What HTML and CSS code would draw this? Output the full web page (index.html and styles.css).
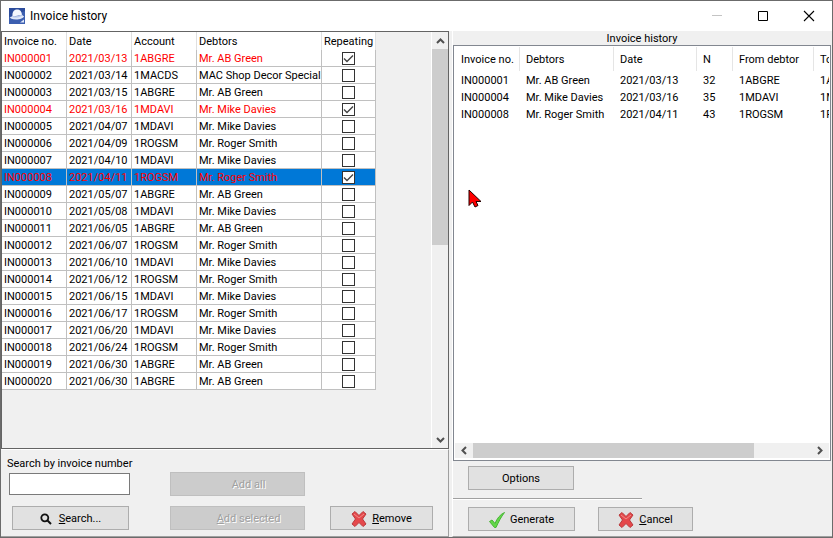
FILE: index.html
```html
<!DOCTYPE html>
<html lang="en">

<head>
  <meta charset="utf-8">
  <title>Invoice history</title>
  <link rel="stylesheet" href="styles.css">
</head>

<body>
  <header class="title-bar">
    <svg class="app-icon" width="16" height="16" viewBox="0 0 16 16">
      <rect width="16" height="16" fill="#3c5fb0"/>
      <path d="M0 9L16 3V0H0z" fill="#2c4c9c"/>
      <path d="M3.500 8.500C3 4 5 1.500 8 1.500s4.500 1.500 5 5.500z" fill="#f4f7fd"/>
      <path d="M1 9c1 0 2-.500 2.500-1 3 .800 6.500.500 9.500-1.500.500 1 1.500 1.500 2 1.500 0 2-4 3.500-8 3.500S1 10.500 1 9z" fill="#dfe7f7"/>
      <path d="M3.500 8c3 .800 6.500.500 9.500-1.500v1.200c-3 2-6.500 2.300-9.500 1.500z" fill="#b9c8ea"/>
      <path d="M11 14.500l4-3v3z" fill="#dfe7f7"/>
    </svg>
    <h1>Invoice history</h1>
    <div class="window-buttons">
      <button aria-label="Minimize" disabled><svg width="12" height="12"><path d="M1 5.500h10" stroke="#c4c4c4"/></svg></button>
      <button aria-label="Maximize"><svg width="12" height="12"><path d="M1.500 1.500h9v9h-9z" fill="none" stroke="#000"/></svg></button>
      <button aria-label="Close"><svg width="12" height="12"><path d="M1 1l10 10M11 1L1 11" stroke="#000" stroke-width="1.100"/></svg></button>
    </div>
  </header>

  <main class="content">
    <section class="left-panel">
      <div class="grid-box">
        <div class="grid-scroll">
          <table class="invoice-table">
            <colgroup><col class="col-no"><col class="col-date"><col class="col-account"><col class="col-debtor"><col class="col-repeat"></colgroup>
            <thead>
              <tr><th>Invoice no.</th><th>Date</th><th>Account</th><th>Debtors</th><th>Repeating</th></tr>
            </thead>
            <tbody>
              <tr class="repeating"><td>IN000001</td><td>2021/03/13</td><td>1ABGRE</td><td>Mr. AB Green</td><td><input type="checkbox" aria-label="Repeat IN000001" checked></td></tr>
              <tr><td>IN000002</td><td>2021/03/14</td><td>1MACDS</td><td>MAC Shop Decor Special</td><td><input type="checkbox" aria-label="Repeat IN000002"></td></tr>
              <tr><td>IN000003</td><td>2021/03/15</td><td>1ABGRE</td><td>Mr. AB Green</td><td><input type="checkbox" aria-label="Repeat IN000003"></td></tr>
              <tr class="repeating"><td>IN000004</td><td>2021/03/16</td><td>1MDAVI</td><td>Mr. Mike Davies</td><td><input type="checkbox" aria-label="Repeat IN000004" checked></td></tr>
              <tr><td>IN000005</td><td>2021/04/07</td><td>1MDAVI</td><td>Mr. Mike Davies</td><td><input type="checkbox" aria-label="Repeat IN000005"></td></tr>
              <tr><td>IN000006</td><td>2021/04/09</td><td>1ROGSM</td><td>Mr. Roger Smith</td><td><input type="checkbox" aria-label="Repeat IN000006"></td></tr>
              <tr><td>IN000007</td><td>2021/04/10</td><td>1MDAVI</td><td>Mr. Mike Davies</td><td><input type="checkbox" aria-label="Repeat IN000007"></td></tr>
              <tr class="repeating selected"><td>IN000008</td><td>2021/04/11</td><td>1ROGSM</td><td>Mr. Roger Smith</td><td><input type="checkbox" aria-label="Repeat IN000008" checked></td></tr>
              <tr><td>IN000009</td><td>2021/05/07</td><td>1ABGRE</td><td>Mr. AB Green</td><td><input type="checkbox" aria-label="Repeat IN000009"></td></tr>
              <tr><td>IN000010</td><td>2021/05/08</td><td>1MDAVI</td><td>Mr. Mike Davies</td><td><input type="checkbox" aria-label="Repeat IN000010"></td></tr>
              <tr><td>IN000011</td><td>2021/06/05</td><td>1ABGRE</td><td>Mr. AB Green</td><td><input type="checkbox" aria-label="Repeat IN000011"></td></tr>
              <tr><td>IN000012</td><td>2021/06/07</td><td>1ROGSM</td><td>Mr. Roger Smith</td><td><input type="checkbox" aria-label="Repeat IN000012"></td></tr>
              <tr><td>IN000013</td><td>2021/06/10</td><td>1MDAVI</td><td>Mr. Mike Davies</td><td><input type="checkbox" aria-label="Repeat IN000013"></td></tr>
              <tr><td>IN000014</td><td>2021/06/12</td><td>1ROGSM</td><td>Mr. Roger Smith</td><td><input type="checkbox" aria-label="Repeat IN000014"></td></tr>
              <tr><td>IN000015</td><td>2021/06/15</td><td>1MDAVI</td><td>Mr. Mike Davies</td><td><input type="checkbox" aria-label="Repeat IN000015"></td></tr>
              <tr><td>IN000016</td><td>2021/06/17</td><td>1ROGSM</td><td>Mr. Roger Smith</td><td><input type="checkbox" aria-label="Repeat IN000016"></td></tr>
              <tr><td>IN000017</td><td>2021/06/20</td><td>1MDAVI</td><td>Mr. Mike Davies</td><td><input type="checkbox" aria-label="Repeat IN000017"></td></tr>
              <tr><td>IN000018</td><td>2021/06/24</td><td>1ROGSM</td><td>Mr. Roger Smith</td><td><input type="checkbox" aria-label="Repeat IN000018"></td></tr>
              <tr><td>IN000019</td><td>2021/06/30</td><td>1ABGRE</td><td>Mr. AB Green</td><td><input type="checkbox" aria-label="Repeat IN000019"></td></tr>
              <tr><td>IN000020</td><td>2021/06/30</td><td>1ABGRE</td><td>Mr. AB Green</td><td><input type="checkbox" aria-label="Repeat IN000020"></td></tr>
            </tbody>
          </table>
        </div>
        <div class="scrollbar vertical">
          <button aria-label="Scroll up"><svg width="9" height="6"><path d="M1 5l3.500-3.500L8 5" fill="none" stroke="#505050" stroke-width="2"/></svg></button>
          <div class="track"><div class="thumb"></div></div>
          <button aria-label="Scroll down"><svg width="9" height="6"><path d="M1 1l3.500 3.500L8 1" fill="none" stroke="#505050" stroke-width="2"/></svg></button>
        </div>
      </div>

      <div class="left-actions">
        <div class="search-group">
          <label for="searchInput">Search by invoice number</label>
          <input id="searchInput" type="text">
          <button class="btn search-btn">
            <svg width="12" height="12" viewBox="0 0 12 12"><circle cx="4.800" cy="4.800" r="3.500" fill="none" stroke="#111" stroke-width="1.800"/><path d="M7.500 7.500L11 11" stroke="#111" stroke-width="2"/></svg>
            <span><u>S</u>earch...</span>
          </button>
        </div>
        <div class="add-group">
          <button class="btn" disabled>Add all</button>
          <button class="btn" disabled><span><u>A</u>dd selected</span></button>
        </div>
        <button class="btn remove-btn">
          <svg width="16" height="16" viewBox="0 0 16 16"><path d="M1 3l3-2.500 4 4 4-4L15 3l-3.500 5 3.500 5-3 2.500-4-4-4 4L1 13l3.500-5z" fill="#e5484b" stroke="#b93a3c"/><path d="M3 3l5 4 5-4" fill="none" stroke="#f28a88"/></svg>
          <span><u>R</u>emove</span>
        </button>
      </div>
    </section>

    <section class="right-panel">
      <h2>Invoice history</h2>
      <div class="list-box">
        <div class="list-scroll">
          <table class="history-table">
            <colgroup><col class="col-no"><col class="col-debtor"><col class="col-date"><col class="col-n"><col class="col-from"><col class="col-to"></colgroup>
            <thead>
              <tr><th>Invoice no.</th><th>Debtors</th><th>Date</th><th>N</th><th>From debtor</th><th>To debtor</th></tr>
            </thead>
            <tbody>
              <tr><td>IN000001</td><td>Mr. AB Green</td><td>2021/03/13</td><td>32</td><td>1ABGRE</td><td>1ABGRE</td></tr>
              <tr><td>IN000004</td><td>Mr. Mike Davies</td><td>2021/03/16</td><td>35</td><td>1MDAVI</td><td>1MDAVI</td></tr>
              <tr><td>IN000008</td><td>Mr. Roger Smith</td><td>2021/04/11</td><td>43</td><td>1ROGSM</td><td>1ROGSM</td></tr>
            </tbody>
          </table>
        </div>
        <div class="scrollbar horizontal">
          <button aria-label="Scroll left"><svg width="6" height="9"><path d="M5 1L1.500 4.500 5 8" fill="none" stroke="#505050" stroke-width="2"/></svg></button>
          <div class="track"><div class="thumb"></div></div>
          <button aria-label="Scroll right"><svg width="6" height="9"><path d="M1 1l3.500 3.500L1 8" fill="none" stroke="#505050" stroke-width="2"/></svg></button>
        </div>
      </div>
      <div class="right-actions">
        <button class="btn options-btn">Options</button>
        <hr>
        <div class="confirm-row">
          <button class="btn generate-btn">
            <svg width="16" height="16" viewBox="0 0 16 16"><path d="M.500 9.500L3 8l3 3.500C8 6.500 11 2.500 15.500.500 12 5 9.500 10 7 15.500H5.500z" fill="#63d84a" stroke="#48b535"/></svg>
            <span>Generate</span>
          </button>
          <button class="btn close-btn">
            <svg width="16" height="16" viewBox="0 0 16 16"><path d="M1 3l3-2.500 4 4 4-4L15 3l-3.500 5 3.500 5-3 2.500-4-4-4 4L1 13l3.500-5z" fill="#e5484b" stroke="#b93a3c"/><path d="M3 3l5 4 5-4" fill="none" stroke="#f28a88"/></svg>
            <span><u>C</u>ancel</span>
          </button>
        </div>
      </div>
    </section>
  </main>

  <svg class="cursor" width="14" height="19" viewBox="0 0 14 19"><path d="M1 1v15.500l3.500-3.500 2.500 5 3-1.500-2-4h5z" fill="#f00" stroke="#200"/></svg>
</body>

</html>
```

FILE: styles.css
```css
* {
  box-sizing: border-box;
}

body {
  margin: 0;
  min-height: 100vh;
  display: flex;
  flex-direction: column;
  font-family: Roboto, "Liberation Sans", sans-serif;
  font-size: 11px;
  line-height: 14px;
  color: #000;
  background: #f0f0f0;
  border: 1px solid #6b6b6b;
}

button,
input {
  font: inherit;
  color: inherit;
}

h1,
h2 {
  margin: 0;
  font-weight: normal;
}

/* title bar */
.title-bar {
  display: flex;
  align-items: center;
  height: 30px;
  padding-left: 8px;
  background: #fff;
}

.title-bar h1 {
  flex: 1;
  margin-left: 5px;
  font-size: 12px;
}

.window-buttons {
  display: flex;
}

.window-buttons button {
  display: flex;
  align-items: center;
  justify-content: center;
  width: 46px;
  height: 30px;
  padding: 0;
  border: none;
  background: none;
}

.content {
  flex: 1;
  display: flex;
  gap: 3px;
}

/* left side */
.left-panel {
  flex: 0 0 448px;
  display: flex;
  flex-direction: column;
  border-bottom: 1px solid #a0a0a0;
}

.grid-box {
  flex: 1;
  display: flex;
  border: 1px solid #646464;
}

.grid-scroll {
  flex: 1;
  overflow: hidden;
}

table {
  table-layout: fixed;
  border-collapse: separate;
  border-spacing: 0;
}

th,
td {
  padding: 2px 0 0;
  font-weight: normal;
  text-align: left;
  white-space: nowrap;
  overflow: hidden;
}

.invoice-table {
  width: 374px;
  background: #fff;
}

.invoice-table .col-no,
.invoice-table .col-date,
.invoice-table .col-account {
  width: 65px;
}

.invoice-table .col-debtor {
  width: 125px;
}

.invoice-table th {
  height: 18px;
  padding-left: 2px;
  border-right: 1px solid #e0e0e0;
}

.invoice-table td {
  height: 17px;
  padding-left: 2px;
  border-right: 1px solid #c0c0c0;
  border-bottom: 1px solid #c0c0c0;
}

.invoice-table td:last-child {
  padding: 0;
  text-align: center;
}

.invoice-table input {
  display: block;
  appearance: none;
  width: 13px;
  height: 13px;
  margin: 0 auto;
  border: 1px solid #333;
  background: #fff;
}

.invoice-table input:checked {
  background: #fff url("data:image/svg+xml,%3Csvg xmlns='http://www.w3.org/2000/svg' viewBox='0 0 11 11'%3E%3Cpath d='M1 5.500l3 3L10 2.500' fill='none' stroke='%23444' stroke-width='1.400'/%3E%3C/svg%3E");
}

.repeating {
  color: #f00;
}

.selected {
  background: #0078d7;
}

/* scrollbars */
.scrollbar {
  display: flex;
  background: #f0f0f0;
}

.scrollbar button {
  display: flex;
  align-items: center;
  justify-content: center;
  padding: 0;
  border: none;
  background: none;
}

.track {
  flex: 1;
}

.thumb {
  background: #cdcdcd;
}

.vertical {
  flex-direction: column;
  width: 17px;
  border-left: 1px solid #fff;
}

.vertical button {
  height: 17px;
}

.vertical .thumb {
  height: 196px;
}

.horizontal {
  height: 15px;
}

.horizontal button {
  width: 18px;
}

.horizontal .thumb {
  width: 83%;
  height: 100%;
}

/* buttons */
.btn {
  display: flex;
  align-items: center;
  justify-content: center;
  gap: 5px;
  height: 24px;
  padding: 1px 0 0;
  border: 1px solid #adadad;
  background: #e1e1e1;
}

.btn:disabled {
  border-color: #bfbfbf;
  background: #ccc;
  color: #a0a0a0;
  text-shadow: 1px 1px 0 #fff;
}

.left-actions {
  display: flex;
  align-items: flex-end;
  height: 87px;
  padding: 0 15px 6px 6px;
  border-top: 1px solid #fff;
  border-right: 1px solid #a0a0a0;
}

.search-group {
  display: flex;
  flex-direction: column;
  width: 124px;
  white-space: nowrap;
}

.search-group input {
  width: 121px;
  height: 22px;
  margin: 2px 0 11px 2px;
  padding: 0 3px;
  border: 1px solid #7a7a7a;
  background: #fff;
}

.search-btn {
  width: 117px;
  margin-left: 5px;
  gap: 7px;
}

.add-group {
  display: flex;
  flex-direction: column;
  gap: 10px;
  width: 135px;
  margin-left: 39px;
}

.add-group .btn {
  padding-left: 22px;
}

.remove-btn {
  width: 103px;
  margin-left: auto;
}

/* right side */
.right-panel {
  flex: 1;
  min-width: 0;
  display: flex;
  flex-direction: column;
  padding-right: 1px;
  border-left: 1px solid #fff;
  border-bottom: 1px solid #a0a0a0;
}

.right-panel h2 {
  padding-top: 2px;
  font-size: 11px;
  line-height: 12px;
  text-align: center;
}

.list-box {
  flex: 1;
  display: flex;
  flex-direction: column;
  padding: 1px 1px 2px;
  border: 1px solid #828790;
  background: #fff;
}

.list-scroll {
  flex: 1;
  overflow: hidden;
}

.history-table {
  width: 440px;
}

.history-table .col-no {
  width: 65px;
}

.history-table .col-debtor {
  width: 94px;
}

.history-table .col-date {
  width: 83px;
}

.history-table .col-n {
  width: 36px;
}

.history-table .col-from {
  width: 81px;
}

.history-table th {
  height: 24px;
  padding-left: 6px;
  border-right: 1px solid #e5e5e5;
}

.history-table td {
  height: 17px;
  padding-left: 6px;
}

.right-actions {
  padding: 5px 0 5px;
}

.options-btn {
  width: 106px;
  margin-left: 15px;
}

.right-actions hr {
  width: 50%;
  margin: 8px 0 7px;
  border: none;
  border-top: 1px solid #a0a0a0;
  border-bottom: 1px solid #fff;
}

.confirm-row {
  display: flex;
  gap: 23px;
  padding-left: 15px;
}

.generate-btn {
  width: 107px;
}

.close-btn {
  width: 95px;
}

/* mouse pointer */
.cursor {
  position: absolute;
  left: 468px;
  top: 189px;
  pointer-events: none;
}
```
